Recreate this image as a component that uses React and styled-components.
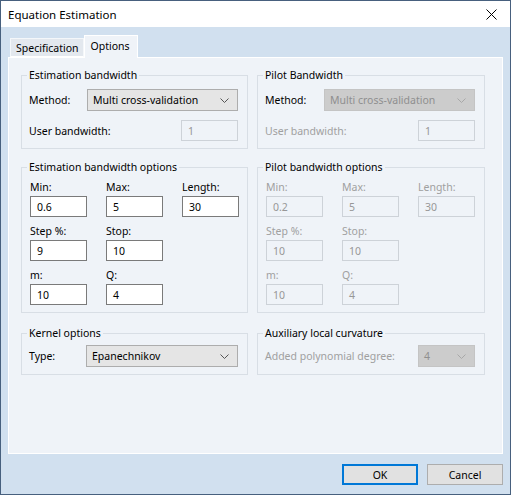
import styled, { createGlobalStyle } from "styled-components";

const GlobalStyle = createGlobalStyle`
  html, body {
    margin: 0;
    padding: 0;
    background: #ffffff;
  }
  * {
    box-sizing: border-box;
  }
`;

const FONT = `"Noto Sans", "Open Sans", sans-serif`;

const Chevron = () => (
  <svg width="9" height="5" viewBox="0 0 9 5">
    <polyline points="0.5,0.5 4.5,4.5 8.5,0.5" fill="none" stroke="currentColor" strokeWidth="1" />
  </svg>
);

const CloseIcon = () => (
  <svg width="11" height="11" viewBox="0 0 11 11">
    <path d="M0.5 0.5 L10.5 10.5 M10.5 0.5 L0.5 10.5" stroke="#000" strokeWidth="1" />
  </svg>
);

const App = () => {
  return (
    <>
      <GlobalStyle />
      <Window>
        <TitleBar>
          <Title>Equation Estimation</Title>
          <CloseButton>
            <CloseIcon />
          </CloseButton>
        </TitleBar>
        <Body>
          <TabRow>
            <Tab>Specification</Tab>
            <Tab $active>Options</Tab>
          </TabRow>
          <Panel>
            <Group>
              <Legend>Estimation bandwidth</Legend>
              <Row>
                <Label>Method:</Label>
                <Combo $w={151}>
                  <span>Multi cross-validation</span>
                  <Chevron />
                </Combo>
              </Row>
              <Row $gap={9}>
                <Label>User bandwidth:</Label>
                <Input $disabled $w={57}>1</Input>
              </Row>
            </Group>

            <Group>
              <Legend>Pilot Bandwidth</Legend>
              <Row>
                <Label>Method:</Label>
                <Combo $w={151} $disabled>
                  <span>Multi cross-validation</span>
                  <Chevron />
                </Combo>
              </Row>
              <Row $gap={9}>
                <Label $disabled>User bandwidth:</Label>
                <Input $disabled $w={57}>1</Input>
              </Row>
            </Group>

            <Group>
              <Legend>Estimation bandwidth options</Legend>
              <FieldGrid>
                <Field>
                  <FieldLabel>Min:</FieldLabel>
                  <Input>0.6</Input>
                </Field>
                <Field>
                  <FieldLabel>Max:</FieldLabel>
                  <Input>5</Input>
                </Field>
                <Field>
                  <FieldLabel>Length:</FieldLabel>
                  <Input>30</Input>
                </Field>
                <Field>
                  <FieldLabel>Step %:</FieldLabel>
                  <Input>9</Input>
                </Field>
                <Field>
                  <FieldLabel>Stop:</FieldLabel>
                  <Input>10</Input>
                </Field>
                <span />
                <Field>
                  <FieldLabel>m:</FieldLabel>
                  <Input>10</Input>
                </Field>
                <Field>
                  <FieldLabel>Q:</FieldLabel>
                  <Input>4</Input>
                </Field>
              </FieldGrid>
            </Group>

            <Group>
              <Legend>Pilot bandwidth options</Legend>
              <FieldGrid>
                <Field>
                  <FieldLabel $disabled>Min:</FieldLabel>
                  <Input $disabled>0.2</Input>
                </Field>
                <Field>
                  <FieldLabel $disabled>Max:</FieldLabel>
                  <Input $disabled>5</Input>
                </Field>
                <Field>
                  <FieldLabel $disabled>Length:</FieldLabel>
                  <Input $disabled>30</Input>
                </Field>
                <Field>
                  <FieldLabel $disabled>Step %:</FieldLabel>
                  <Input $disabled>10</Input>
                </Field>
                <Field>
                  <FieldLabel $disabled>Stop:</FieldLabel>
                  <Input $disabled>10</Input>
                </Field>
                <span />
                <Field>
                  <FieldLabel $disabled>m:</FieldLabel>
                  <Input $disabled>10</Input>
                </Field>
                <Field>
                  <FieldLabel $disabled>Q:</FieldLabel>
                  <Input $disabled>4</Input>
                </Field>
              </FieldGrid>
            </Group>

            <Group $late>
              <Legend>Kernel options</Legend>
              <Row $top={4}>
                <Label>Type:</Label>
                <Combo $w={152}>
                  <span>Epanechnikov</span>
                  <Chevron />
                </Combo>
              </Row>
            </Group>

            <Group $late>
              <Legend>Auxiliary local curvature</Legend>
              <Row $top={4}>
                <Label $disabled>Added polynomial degree:</Label>
                <Combo $w={57} $disabled>
                  <span>4</span>
                  <Chevron />
                </Combo>
              </Row>
            </Group>
          </Panel>
          <Footer>
            <Button $default>OK</Button>
            <Button>Cancel</Button>
          </Footer>
        </Body>
      </Window>
    </>
  );
};

export default App;

const Window = styled.div`
  width: 511px;
  height: 495px;
  border: 1px solid #47607e;
  background: #d1e0ef;
  display: flex;
  flex-direction: column;
  font-family: ${FONT};
  font-size: 10.5px;
  color: #000;
`;

const TitleBar = styled.div`
  height: 26px;
  background: #ffffff;
  display: flex;
  align-items: center;
  justify-content: space-between;
  padding-left: 7px;
`;

const Title = styled.div`
  font-size: 11.5px;
`;

const CloseButton = styled.div`
  width: 36px;
  height: 26px;
  display: flex;
  align-items: center;
  justify-content: center;
  margin-right: 1px;
`;

const Body = styled.div`
  flex: 1;
  display: flex;
  flex-direction: column;
  padding: 8px 7px 0 7px;
`;

const TabRow = styled.div`
  height: 22px;
  display: flex;
  align-items: flex-end;
  padding-left: 2px;
  position: relative;
  z-index: 1;
`;

const Tab = styled.div`
  height: ${(p) => (p.$active ? "23px" : "19px")};
  margin-bottom: ${(p) => (p.$active ? "-1px" : "0")};
  padding: ${(p) => (p.$active ? "0 7px 2px 6px" : "0 4px 0 5px")};
  display: flex;
  align-items: center;
  background: ${(p) => (p.$active ? "#eff3f8" : "#e3e8ee")};
  border: 1px solid ${(p) => (p.$active ? "#ffffff" : "#f4f7fa")};
  border-bottom: ${(p) => (p.$active ? "none" : "1px solid #ffffff")};
`;

const Panel = styled.div`
  height: 397px;
  border: 1px solid #ffffff;
  background: #eff3f8;
  display: grid;
  grid-template-columns: 227px 228px;
  column-gap: 9px;
  row-gap: 11px;
  align-content: start;
  padding: 10px 16px 0 12px;
`;

const Group = styled.fieldset`
  margin: ${(p) => (p.$late ? "2px 0 0" : "0")};
  min-width: 0;
  border: 1px solid #d8dee5;
  padding: 0 9px 7px 7px;
`;

const Legend = styled.legend`
  padding: 0 2px;
  margin-left: -2px;
  line-height: 15px;
`;

const Row = styled.div`
  display: flex;
  align-items: center;
  justify-content: space-between;
  margin-top: ${(p) => (p.$top ?? (p.$gap ?? 6))}px;
`;

const Label = styled.span`
  color: ${(p) => (p.$disabled ? "#a0a0a0" : "#000")};
`;

const Combo = styled.div`
  width: ${(p) => p.$w}px;
  height: 22px;
  display: flex;
  align-items: center;
  justify-content: space-between;
  padding: 0 8px 0 5px;
  border: 1px solid ${(p) => (p.$disabled ? "#c4c4c4" : "#adadad")};
  background: ${(p) => (p.$disabled ? "#cccccc" : "#e5e5e5")};
  color: ${(p) => (p.$disabled ? "#8f8f8f" : "#000")};
  svg {
    color: ${(p) => (p.$disabled ? "#a8a8a8" : "#555")};
  }
`;

const Input = styled.div`
  width: ${(p) => p.$w || 57}px;
  height: 21px;
  display: flex;
  align-items: center;
  padding-left: 6px;
  border: 1px solid ${(p) => (p.$disabled ? "#cdd2d8" : "#7a7a7a")};
  background: ${(p) => (p.$disabled ? "#eff3f8" : "#ffffff")};
  color: ${(p) => (p.$disabled ? "#979797" : "#000")};
`;

const FieldGrid = styled.div`
  display: grid;
  grid-template-columns: 57px 57px 57px;
  column-gap: 19px;
  row-gap: 7px;
  margin-top: 5px;
  padding-left: 1px;
`;

const Field = styled.div`
  display: flex;
  flex-direction: column;
  gap: 1px;
`;

const FieldLabel = styled.span`
  line-height: 15px;
  color: ${(p) => (p.$disabled ? "#a0a0a0" : "#000")};
`;

const Footer = styled.div`
  display: flex;
  justify-content: flex-end;
  gap: 9px;
  padding-top: 10px;
`;

const Button = styled.div`
  width: 76px;
  height: 21px;
  display: flex;
  align-items: center;
  justify-content: center;
  background: #e1e1e1;
  border: 1px solid ${(p) => (p.$default ? "#0078d7" : "#adadad")};
  box-shadow: ${(p) => (p.$default ? "inset 0 0 0 1px #0078d7" : "none")};
`;
